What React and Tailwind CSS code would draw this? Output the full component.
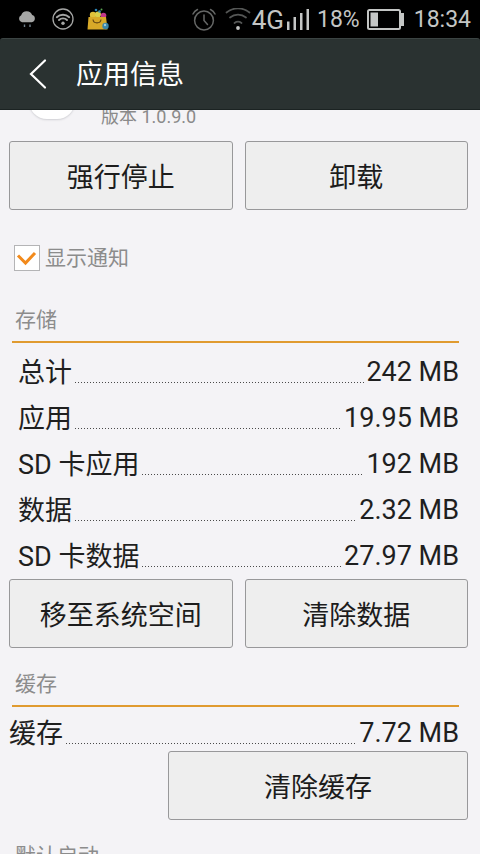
import React from "react";

function StatusBar() {
  return (
    <div className="flex h-[38px] shrink-0 items-center bg-black pr-[9px] pl-[18px] text-[#c4c6c5]">
      <svg className="h-[18px] w-[18px]" viewBox="0 0 18 18" aria-hidden="true">
        <path
          d="M4 12.200a3.700 3.700 0 0 1-.8-7A5.800 5.800 0 0 1 14.200 5a3.700 3.700 0 0 1-.4 7.200z"
          fill="#a5a6a5"
        />
        <path d="M6.500 14.500v2.500M12 14.500v2.500" stroke="#6f7f8a" strokeWidth="1.400" />
      </svg>
      <svg className="ml-4 h-[22px] w-[22px]" viewBox="0 0 22 22" fill="none" stroke="#a5a6a5" aria-hidden="true">
        <circle cx="11" cy="11" r="10" strokeWidth="1.300" />
        <path d="M4.800 9.200a9 9 0 0 1 12.400 0M7 12a5.800 5.800 0 0 1 8 0" strokeWidth="1.900" strokeLinecap="round" />
        <circle cx="11" cy="15.200" r="1.700" fill="#a5a6a5" stroke="none" />
      </svg>
      <svg className="ml-[13px] h-[24px] w-[24px]" viewBox="0 0 24 24" aria-hidden="true">
        <circle cx="6" cy="8" r="3.200" fill="#e0c13a" />
        <circle cx="11" cy="7.500" r="3" fill="#d9cf4a" />
        <circle cx="16.500" cy="8.500" r="2.800" fill="#c2378a" />
        <circle cx="9" cy="3" r="1.300" fill="#2b83b5" />
        <circle cx="12.500" cy="4.500" r="1.300" fill="#3d96b8" />
        <circle cx="14.500" cy="2.500" r="1" fill="#57a552" />
        <path d="M1.500 10h17.500L20.500 22.500H.5z" fill="#d8a928" />
        <path d="M6 12.500c.5 4.500 7.500 4.500 8 0" fill="none" stroke="#5e4210" strokeWidth="1.100" />
        <circle cx="18.500" cy="19" r="3.200" fill="#3a86a8" />
        <circle cx="18" cy="18" r="1.200" fill="#9cc8d8" />
      </svg>
      <div className="ml-auto flex items-center pt-[2px]">
        <svg className="h-[24px] w-[24px]" viewBox="0 0 24 24" fill="none" stroke="#656766" strokeWidth="1.500" aria-hidden="true">
          <circle cx="12" cy="12.500" r="9.400" />
          <path d="M12 7v5.500l3.500 4M1 6a9 9 0 0 1 4.500-4.500M18.500 1.500A9 9 0 0 1 23 6" strokeLinecap="round" />
        </svg>
        <svg className="ml-[9px] h-[24px] w-[26px]" viewBox="0 0 26 24" fill="none" stroke="#555756" strokeWidth="1.700" strokeLinecap="round" aria-hidden="true">
          <path d="M1.500 4.500a18 18 0 0 1 23 0M5 9.500a12.500 12.500 0 0 1 16 0M9.500 15a6 6 0 0 1 7 0" />
          <circle cx="13" cy="20" r="1.900" fill="#c4c6c5" stroke="none" />
        </svg>
        <span className="ml-px text-[26px] leading-[36px]">4G</span>
        <svg className="ml-[2px] h-[22px] w-[24px]" viewBox="0 0 24 22" fill="#c4c6c5" aria-hidden="true">
          <path d="M1 12.500h2.500V21H1zM7.500 8H10v13H7.500zM14 4h2.500v17H14zM20.500 0H23v21h-2.500z" />
        </svg>
        <span className="ml-[7px] text-[23px] leading-[36px]">18%</span>
        <svg className="ml-[7px] h-[22px] w-[37px]" viewBox="0 0 37 22" aria-hidden="true">
          <rect x="1" y="1" width="32" height="19" rx="1.500" fill="none" stroke="#c4c6c5" strokeWidth="2" />
          <path d="M3.500 3.500H11v14H3.500zM34 4h3v13h-3z" fill="#c4c6c5" />
        </svg>
        <span className="ml-[10px] text-[23px] leading-[36px]">18:34</span>
      </div>
    </div>
  );
}

function Header() {
  return (
    <header className="shrink-0 bg-black">
      <div className="flex h-[72px] items-center rounded-t-[3px] border-t border-b border-t-[#3b4443] border-b-[#1b2322] bg-[#2a3231] pl-[28px] text-white">
        <button type="button" aria-label="返回" className="flex">
          <svg className="h-[32px] w-[20px]" viewBox="0 0 20 32" fill="none" stroke="currentColor" strokeWidth="2.200" strokeLinecap="round" aria-hidden="true">
            <path d="M17 2.500 3 16l14 13.500" />
          </svg>
        </button>
        <h1 className="ml-[28px] pt-[2px] text-[27px] leading-[36px]">应用信息</h1>
      </div>
    </header>
  );
}

function ActionButton({ children, className = "flex-1" }) {
  return (
    <button
      type="button"
      className={`h-[69px] rounded-[3px] border border-[#98989a] bg-[#eeeeee] pt-1 text-[27px] leading-[36px] text-[#1c1c1c] ${className}`}
    >
      {children}
    </button>
  );
}

function SectionTitle({ children }) {
  return (
    <h2 className="mr-[9px] ml-[3px] border-b-2 border-[#e09b30] pt-[22px] pb-[7px] pl-[3px] text-[21px] leading-[28px] text-[#8c8c8c]">
      {children}
    </h2>
  );
}

function SizeRow({ label, value, className = "h-[46px] pl-[9px]" }) {
  return (
    <div className={`flex items-center pr-[9px] text-[27px] leading-[36px] text-[#1f1f1f] ${className}`}>
      <dt className="pt-[2px]">{label}</dt>
      <div className="mt-5 mr-[2px] ml-[3px] h-px flex-1 bg-[repeating-linear-gradient(90deg,#4a4a4a_0_1px,transparent_1px_3px)]" />
      <dd>{value}</dd>
    </div>
  );
}

const storage = [
  ["总计", "242 MB"],
  ["应用", "19.95 MB"],
  ["SD 卡应用", "192 MB"],
  ["数据", "2.32 MB"],
  ["SD 卡数据", "27.97 MB"],
];

export default function App() {
  return (
    <div className="flex h-dvh flex-col overflow-hidden bg-[#f4f3f6] font-[Roboto,'Noto_Sans_CJK_SC',sans-serif]">
      <StatusBar />
      <Header />
      <main className="flex-1 overflow-hidden pr-[12px] pl-[9px]">
        <div className="flex h-[31px] items-end overflow-hidden pb-[12px] pl-[20px]">
          <div className="mb-[10px] h-[46px] w-[46px] shrink-0 rounded-[18px] bg-white shadow-[0_1px_2px_#cfcfd3]" />
          <p className="ml-[26px] text-[18px] leading-[24px] text-[#8a8a8a]">版本 1.0.9.0</p>
        </div>
        <div className="flex gap-3">
          <ActionButton>强行停止</ActionButton>
          <ActionButton>卸载</ActionButton>
        </div>
        <div className="flex h-[74px] items-end pb-[13px] pl-[5px]">
          <label className="flex items-center gap-[5px] text-[21px] leading-[26px] text-[#8c8c8c]">
            <span className="grid h-[26px] w-[26px]">
              <input
                type="checkbox"
                defaultChecked
                className="peer col-start-1 row-start-1 h-[26px] w-[26px] appearance-none border border-[#b4b4b6] bg-white"
              />
              <svg
                className="pointer-events-none col-start-1 row-start-1 hidden h-[26px] w-[26px] peer-checked:block"
                viewBox="0 0 26 26"
                fill="none"
                stroke="#f28a1c"
                strokeWidth="3"
                aria-hidden="true"
              >
                <path d="m4 10.500 7.500 7.500L21 8" />
              </svg>
            </span>
            <span className="pt-px">显示通知</span>
          </label>
        </div>
        <section>
          <SectionTitle>存储</SectionTitle>
          <dl className="pt-[6px]">
            {storage.map(([label, value]) => (
              <SizeRow key={label} label={label} value={value} />
            ))}
          </dl>
          <div className="flex gap-3">
            <ActionButton>移至系统空间</ActionButton>
            <ActionButton>清除数据</ActionButton>
          </div>
        </section>
        <section>
          <SectionTitle>缓存</SectionTitle>
          <dl className="pt-2">
            <SizeRow label="缓存" value="7.72 MB" className="h-9" />
          </dl>
          <div className="flex">
            <ActionButton className="ml-auto w-[300px]">清除缓存</ActionButton>
          </div>
        </section>
        <section>
          <SectionTitle>默认启动</SectionTitle>
        </section>
      </main>
    </div>
  );
}
